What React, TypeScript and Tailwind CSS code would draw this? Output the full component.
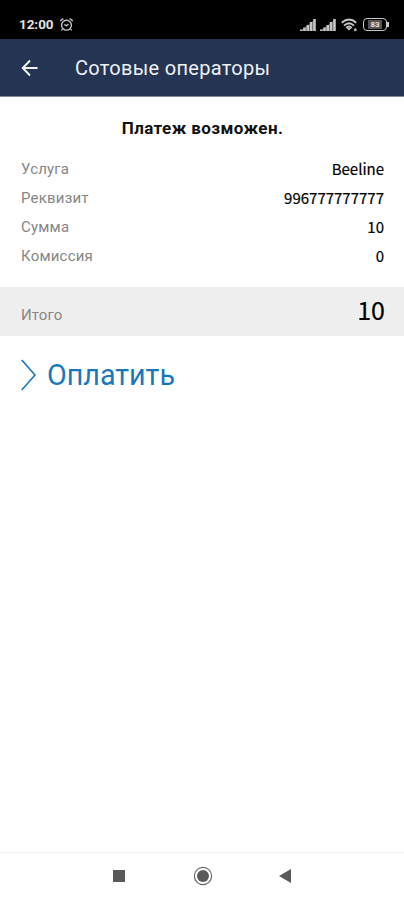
const details = [
  { label: "Услуга", value: "Beeline" },
  { label: "Реквизит", value: "996777777777" },
  { label: "Сумма", value: "10" },
  { label: "Комиссия", value: "0" },
]

function AlarmIcon() {
  return (
    <svg className="ml-[5px] h-4 w-4" viewBox="0 0 16 16" fill="none" stroke="#c4c4c4" strokeWidth="1.4">
      <circle cx="7.5" cy="8.2" r="4.9" />
      <path d="M1.2 3.9 4.4 1.5M13.8 3.9 10.6 1.5M5.3 7.6 7.5 8.6l2-1.4M3.4 12.2l-1 1.2M11.6 12.2l1 1.2" />
    </svg>
  )
}

function SignalIcon() {
  return (
    <svg className="h-3 w-4" viewBox="0 0 16 12">
      <path d="M0 12 15.7 0v12z" fill="#5c5c5c" />
      <path d="M0 10.5h2.5V12H0zM3.2 8.5h2.5V12H3.2zM6.5 6H9v6H6.5zM9.8 3h2.5v9H9.8zM13.2 0h2.5v12h-2.5z" fill="#c4c4c4" />
    </svg>
  )
}

function WifiIcon() {
  return (
    <svg className="h-[14px] w-[17px]" viewBox="0 0 17 14" fill="none" stroke="#c8c8c8" strokeWidth="1.9">
      <path d="M.8 4.8Q8 -1.6 15.2 4.8M3 7.6Q8 3 13 7.6M5.2 9.9Q8 7.2 10.8 9.9" />
      <path d="M5.6 10h4.8L8 12.6z" fill="#c8c8c8" stroke="none" />
      <circle cx="14.3" cy="11.8" r="1.5" fill="#a8a8a8" stroke="none" />
    </svg>
  )
}

function StatusBar() {
  return (
    <div className="flex h-[39px] items-center bg-black pt-[10px] pr-[15px] pl-[19px] text-[#e2e2e2]">
      <span className="text-[13.4px] leading-4 font-bold">12:00</span>
      <AlarmIcon />
      <div className="ml-auto flex items-center">
        <SignalIcon />
        <div className="ml-1">
          <SignalIcon />
        </div>
        <div className="ml-[5px]">
          <WifiIcon />
        </div>
        <div className="ml-[5px] flex h-[13px] w-6 items-center justify-center rounded-[4px] border-[1.5px] border-[#c8c8c8]">
          <span className="bg-[#555] px-[2px] text-[8px] leading-[9px] font-bold">83</span>
        </div>
        <div className="h-[5px] w-[2px] bg-[#c8c8c8]" />
      </div>
    </div>
  )
}

export default function App() {
  return (
    <div className="flex h-[900px] w-[404px] flex-col bg-white font-['Roboto','Liberation_Sans',sans-serif]">
      <StatusBar />

      {/* Header */}
      <header className="flex h-[58px] items-center border-b border-[#7f899b] bg-[#253452] pl-[21px] text-[#eef1f5]">
        <svg className="h-[18px] w-[17px]" viewBox="0 0 17 18" fill="none" stroke="currentColor" strokeWidth="2">
          <path d="M9 1.5 1.8 9 9 16.5M2 9h14.5" />
        </svg>
        <h1 className="ml-[37px] text-[20px] leading-6 tracking-[0.3px]">Сотовые операторы</h1>
      </header>

      {/* Payment details */}
      <main className="flex-1">
        <h2 className="mt-[21px] pl-px text-center text-[17px] leading-5 font-bold tracking-[0.4px] text-[#111]">
          Платеж возможен.
        </h2>
        <div className="mt-[17px]">
          {details.map((item) => (
            <div key={item.label} className="flex h-[29px] items-center justify-between pr-5 pl-[21px]">
              <span className="text-[15px] tracking-[0.2px] text-[#868686]">{item.label}</span>
              <span className="pb-[2px] font-['Noto_Sans_CJK_SC',sans-serif] text-[15px] leading-5 text-black [-webkit-text-stroke:0.2px_black]">
                {item.value}
              </span>
            </div>
          ))}
        </div>

        <div className="mt-4 flex h-[49px] items-center justify-between bg-[#eee] pr-[19px] pl-[21px]">
          <span className="pt-[7px] text-[15px] tracking-[0.1px] text-[#868686]">Итого</span>
          <span className="pb-[5px] font-['Noto_Sans_CJK_SC',sans-serif] text-[25px] leading-8 text-black [-webkit-text-stroke:0.2px_black]">
            10
          </span>
        </div>

        <button className="mt-[23px] ml-[21px] flex items-center text-[#1977bb]">
          <svg className="h-[32px] w-[15px]" viewBox="0 0 15 32" fill="none" stroke="currentColor" strokeWidth="1.6">
            <path d="M.8 1 14 16 .8 31" />
          </svg>
          <span className="ml-[11px] text-[28.7px] leading-8">Оплатить</span>
        </button>
      </main>

      {/* System navigation */}
      <nav className="flex h-12 items-center border-t border-[#f3f3f3] pb-px pl-[113px]">
        <div className="h-3 w-3 bg-[#5a5a5a]" />
        <svg className="ml-[68px] h-5 w-5" viewBox="0 0 20 20" fill="none" stroke="#6a6a6a">
          <circle cx="10" cy="10" r="8.6" strokeWidth="1.2" />
          <circle cx="10" cy="10" r="6" fill="#5a5a5a" stroke="none" />
        </svg>
        <svg className="ml-[66px] h-[14px] w-3" viewBox="0 0 12 14" fill="#5a5a5a">
          <path d="M12 0v14L0 7z" />
        </svg>
      </nav>
    </div>
  )
}
